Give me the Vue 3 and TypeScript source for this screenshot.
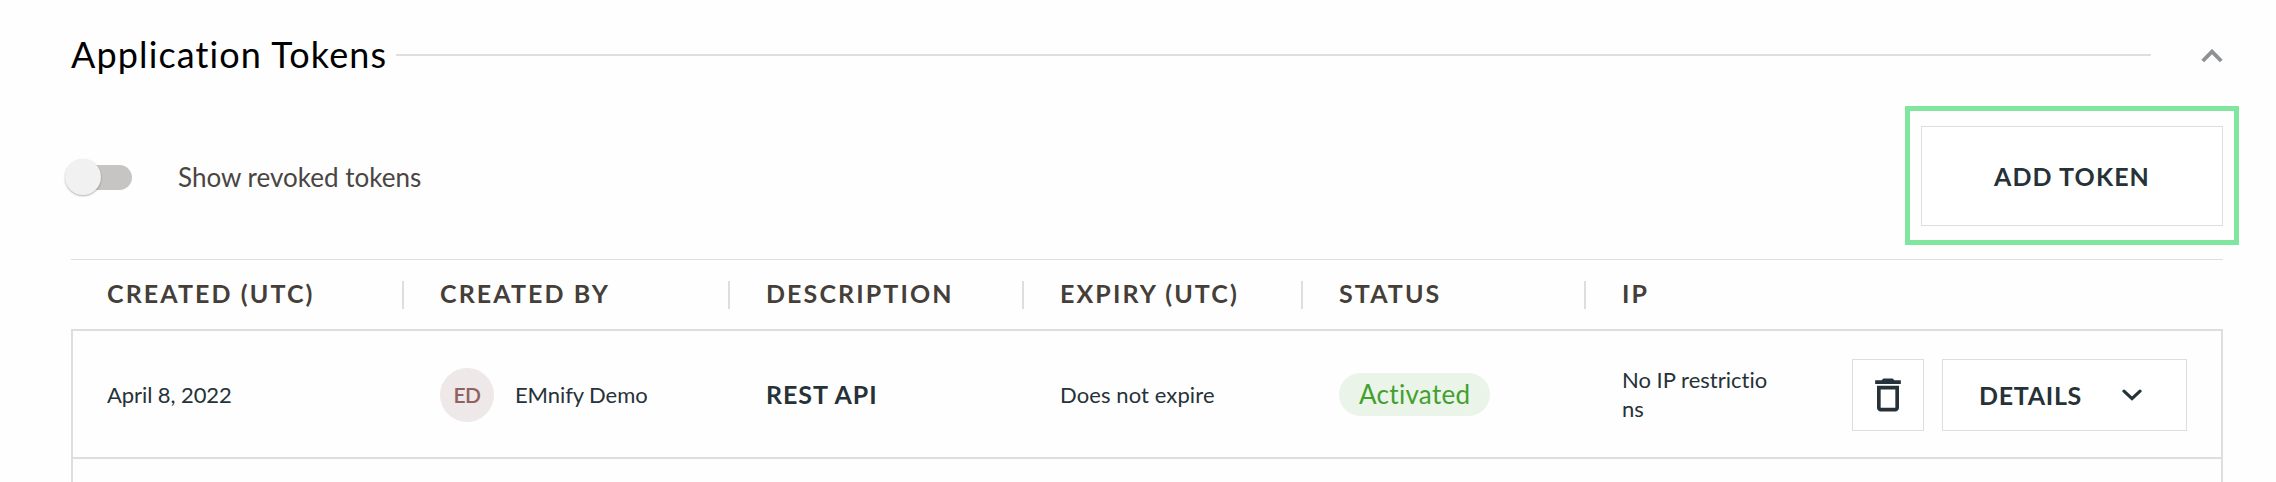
<script setup lang="ts">
import { ref } from 'vue'

interface Column {
  key: string
  label: string
}

interface Token {
  created: string
  initials: string
  author: string
  description: string
  expiry: string
  status: string
  ip: string
}

const columns: Column[] = [
  { key: 'created', label: 'CREATED (UTC)' },
  { key: 'author', label: 'CREATED BY' },
  { key: 'description', label: 'DESCRIPTION' },
  { key: 'expiry', label: 'EXPIRY (UTC)' },
  { key: 'status', label: 'STATUS' },
  { key: 'ip', label: 'IP' },
]

const tokens: Token[] = [
  {
    created: 'April 8, 2022',
    initials: 'ED',
    author: 'EMnify Demo',
    description: 'REST API',
    expiry: 'Does not expire',
    status: 'Activated',
    ip: 'No IP restrictions',
  },
]

const showRevoked = ref(false)
</script>

<template>
  <section class="panel">
    <header class="panel-head">
      <h2 class="title">Application Tokens</h2>
      <span class="rule"></span>
      <svg class="collapse" viewBox="0 0 22 14" aria-hidden="true">
        <path d="M1.7 12 11 2.6l9.3 9.4" />
      </svg>
    </header>

    <div class="toolbar">
      <label class="toggle-row">
        <input v-model="showRevoked" class="toggle-input" type="checkbox" />
        <span class="toggle" :class="{ on: showRevoked }"><span class="thumb"></span></span>
        <span class="toggle-label">Show revoked tokens</span>
      </label>
      <div class="highlight">
        <button class="add" type="button">ADD TOKEN</button>
      </div>
    </div>

    <div class="table">
      <div class="row head">
        <div v-for="c in columns" :key="c.key" class="th"><span>{{ c.label }}</span></div>
      </div>
      <div class="body">
        <div v-for="t in tokens" :key="t.created" class="row item">
          <div class="cell">{{ t.created }}</div>
          <div class="cell">
            <span class="avatar">{{ t.initials }}</span>
            <span>{{ t.author }}</span>
          </div>
          <div class="cell strong">{{ t.description }}</div>
          <div class="cell expiry">{{ t.expiry }}</div>
          <div class="cell"><span class="badge">{{ t.status }}</span></div>
          <div class="cell"><span class="ip">{{ t.ip }}</span></div>
          <div class="actions">
            <button class="btn icon-btn" type="button" aria-label="Delete">
              <svg class="trash" viewBox="0 0 24 24" aria-hidden="true">
                <path d="M6 19c0 1.1.9 2 2 2h8c1.1 0 2-.9 2-2V7H6v12zM8 9h8v10H8V9zm7.5-5l-1-1h-5l-1 1H5v2h14V4z" />
              </svg>
            </button>
            <button class="btn details" type="button">
              <span>DETAILS</span>
              <svg class="chevron" viewBox="0 0 20 12" aria-hidden="true">
                <path d="M2 2.2 10 9.6l8-7.4" />
              </svg>
            </button>
          </div>
        </div>
      </div>
    </div>
  </section>
</template>

<style>
body {
  background: #fefefe;
  overflow: hidden;
}
</style>

<style scoped>
.panel {
  box-sizing: border-box;
  height: 482px;
  padding: 24px 53px 0 71px;
  overflow: hidden;
  background: #fefefe;
  color: #263238;
  font-family: Lato, "Liberation Sans", sans-serif;
  display: flex;
  flex-direction: column;
}
.panel-head {
  display: flex;
  align-items: center;
  height: 62px;
  flex: none;
}
.title {
  width: 325px;
  margin: -2px 0 0;
  color: #000;
  font-size: 36px;
  line-height: 60px;
  font-weight: 400;
  letter-spacing: 1.12px;
  white-space: nowrap;
}
.rule {
  flex: 1;
  height: 2px;
  background: #dedede;
}
.collapse {
  width: 22px;
  height: 14px;
  margin: 1px 0 0 50px;
  fill: none;
  stroke: #8f9294;
  stroke-width: 3.9;
}
.toolbar {
  display: flex;
  justify-content: space-between;
  align-items: flex-start;
  height: 153px;
  margin: 20px -16px 0 -7px;
  flex: none;
}
.toggle-row {
  display: flex;
  align-items: center;
  height: 36px;
  margin-top: 53px;
}
.toggle-input {
  display: none;
}
.toggle {
  display: flex;
  align-items: center;
  width: 62px;
  height: 25px;
  margin-left: 6px;
  border-radius: 13px;
  background: #c6c5c3;
}
.thumb {
  flex: none;
  width: 36px;
  height: 36px;
  margin-left: -5px;
  border-radius: 50%;
  background: #f1f1f1;
  box-shadow: 0 1px 2px rgba(0, 0, 0, 0.3);
}
.toggle.on .thumb {
  margin-left: 31px;
}
.toggle-label {
  margin-left: 46px;
  color: #4a4542;
  font-size: 26px;
  letter-spacing: 0.01px;
}
.highlight {
  box-sizing: border-box;
  width: 334px;
  height: 139px;
  padding: 15px 10px 0 11px;
  border: 5px solid #7fe59f;
}
.add {
  display: block;
  box-sizing: border-box;
  width: 302px;
  height: 100px;
  padding: 0 0 1px;
  border: 1px solid #dedede;
  background: #fff;
  color: #263238;
  font: 700 25px Lato, sans-serif;
  letter-spacing: 1.1px;
}
.table {
  flex: none;
  border-top: 1px solid #dedede;
}
.row {
  display: grid;
  grid-template-columns: 333px 326px 294px 279px 283px 1fr;
}
.head {
  height: 69px;
}
.th {
  box-sizing: border-box;
  height: 28px;
  margin-top: 21px;
  padding-left: 36px;
  border-right: 2px solid #dedede;
  color: #453e39;
  font-size: 25px;
  line-height: 25px;
  font-weight: 700;
  letter-spacing: 2.1px;
  white-space: nowrap;
}
.th:last-child {
  border-right: 0;
}
.body {
  height: 160px;
  border: 2px solid #dedede;
}
.item {
  grid-template-columns: 331px 326px 294px 279px 283px 190px 1fr;
  height: 126px;
  border-bottom: 2px solid #dedede;
}
.cell {
  display: flex;
  align-items: center;
  padding-left: 36px;
  font-size: 22px;
  line-height: 29px;
  letter-spacing: -0.08px;
}
.cell:first-child {
  padding-left: 34px;
}
.expiry {
  letter-spacing: 0.1px;
}
.strong {
  font-size: 25px;
  font-weight: 700;
  letter-spacing: 0.95px;
}
.avatar {
  width: 54px;
  height: 54px;
  margin: 1px 21px 0 0;
  border-radius: 50%;
  background: #eee8e8;
  color: #8f6161;
  font-size: 21px;
  line-height: 54px;
  font-weight: 600;
  letter-spacing: -0.6px;
  text-align: center;
}
.badge {
  height: 43px;
  padding: 0 20px;
  border-radius: 22px;
  background: #eaf4e9;
  color: #43a02f;
  font-size: 26px;
  line-height: 43px;
  letter-spacing: 0.3px;
}
.ip {
  width: 151px;
  letter-spacing: 0.02px;
  word-break: break-all;
}
.actions {
  display: flex;
  justify-content: flex-end;
  align-items: center;
  gap: 18px;
  padding: 2px 34px 0 0;
}
.btn {
  display: flex;
  align-items: center;
  box-sizing: border-box;
  height: 72px;
  padding: 0;
  border: 1px solid #dedede;
  background: #fff;
  color: #263238;
}
.icon-btn {
  justify-content: center;
  width: 72px;
}
.trash {
  width: 44px;
  height: 44px;
  fill: #263238;
}
.details {
  justify-content: space-between;
  width: 245px;
  padding: 0 44px 1px 36px;
  font: 700 25px Lato, sans-serif;
  letter-spacing: 0.7px;
}
.chevron {
  width: 20px;
  height: 12px;
  fill: none;
  stroke: #263238;
  stroke-width: 3.2;
  stroke-linecap: round;
}
</style>
